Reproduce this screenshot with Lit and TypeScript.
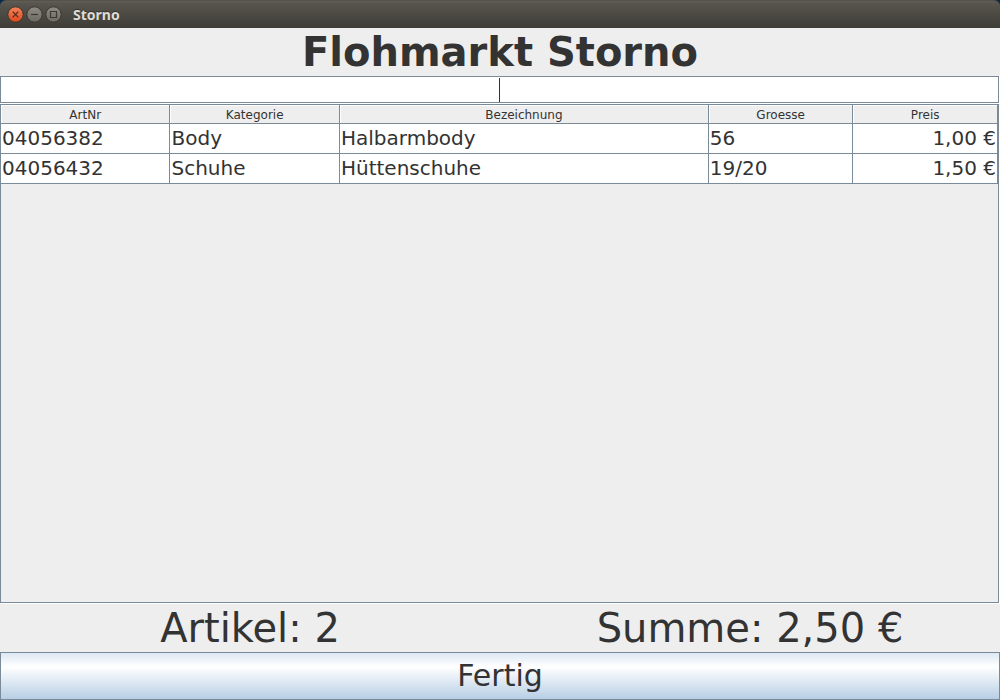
import { LitElement, html, svg, css } from "lit";
import { customElement, property, state } from "lit/decorators.js";

interface Item {
  artNr: string;
  category: string;
  label: string;
  size: string;
  price: number;
}

const euro = (value: number) => `${value.toFixed(2).replace(".", ",")} €`;

@customElement("title-bar")
export class TitleBar extends LitElement {
  @property() caption = "";

  static styles = css`
    :host {
      display: block;
      background: #06284c;
    }
    .bar {
      display: flex;
      align-items: center;
      gap: 2px;
      box-sizing: border-box;
      height: 28px;
      padding: 0 7px;
      border-top: 1px solid #55534a;
      border-radius: 6px 6px 0 0;
      background: linear-gradient(#5f5d54, #57554d 10%, #3d3c37);
    }
    .control {
      display: block;
      width: 17px;
      height: 17px;
      padding: 0;
      border: 0;
      background: none;
    }
    .control svg {
      display: block;
    }
    .caption {
      margin: 0 0 0 9px;
      font: bold 14px/21px "Noto Sans", "Open Sans", sans-serif;
      color: #dfdbd2;
      text-shadow: 0 -1px 0 #33322e;
    }
  `;

  private control(label: string, top: string, bottom: string, ink: string, glyph: string) {
    return html`
      <button class="control" aria-label=${label}>
        <svg width="17" height="17" viewBox="0 0 17 17" fill="none">
          ${svg`
            <defs>
              <linearGradient id=${label} x2="0" y2="1">
                <stop offset="0" stop-color=${top} />
                <stop offset="1" stop-color=${bottom} />
              </linearGradient>
            </defs>
            <circle cx="8.5" cy="8.5" r="7.7" fill="url(#${label})" stroke="#3a3530" />
            <path d=${glyph} stroke=${ink} stroke-width="1.2" />
          `}
        </svg>
      </button>
    `;
  }

  render() {
    return html`
      <header class="bar">
        ${this.control("Schliessen", "#f5835c", "#e0491a", "#4b2a1c", "M5.7 5.7l5.6 5.6M11.3 5.7l-5.6 5.6")}
        ${this.control("Minimieren", "#8f8c83", "#6b6962", "#3a3934", "M5 8.5h7")}
        ${this.control("Maximieren", "#8f8c83", "#6b6962", "#3a3934", "M5.5 5.5h6v6h-6z")}
        <p class="caption">${this.caption}</p>
      </header>
    `;
  }
}

@customElement("item-table")
export class ItemTable extends LitElement {
  @property({ attribute: false }) items: Item[] = [];

  static styles = css`
    :host {
      display: block;
      border: 1px solid #7a8a99;
      box-shadow: 1px 1px 0 #fff;
    }
    .table {
      width: 100%;
      table-layout: fixed;
      border-collapse: separate;
      border-spacing: 0;
      color: #333;
    }
    .medium {
      width: 17%;
    }
    .wide {
      width: 37%;
    }
    .narrow {
      width: 14.5%;
    }
    .head {
      height: 19px;
      box-sizing: border-box;
      padding: 2px 0 0;
      border-right: 1px solid #7a8a99;
      border-bottom: 1px solid #7a8a99;
      background: #eee;
      box-shadow: inset 1px 1px 0 #fff;
      font-size: 12px;
      font-weight: normal;
      line-height: 16px;
      text-align: center;
    }
    .cell {
      height: 30px;
      box-sizing: border-box;
      padding: 0 1px;
      border-right: 1px solid #7a8a99;
      border-bottom: 1px solid #7a8a99;
      background: #fff;
      font-size: 20px;
      line-height: 29px;
      white-space: nowrap;
    }
    .price {
      text-align: right;
    }
  `;

  render() {
    return html`
      <table class="table">
        <colgroup>
          <col class="medium" />
          <col class="medium" />
          <col class="wide" />
          <col class="narrow" />
          <col />
        </colgroup>
        <thead>
          <tr>
            ${["ArtNr", "Kategorie", "Bezeichnung", "Groesse", "Preis"].map(
              (name) => html`<th class="head" scope="col">${name}</th>`
            )}
          </tr>
        </thead>
        <tbody>
          ${this.items.map(
            (item) => html`
              <tr>
                <td class="cell">${item.artNr}</td>
                <td class="cell">${item.category}</td>
                <td class="cell">${item.label}</td>
                <td class="cell">${item.size}</td>
                <td class="cell price">${euro(item.price)}</td>
              </tr>
            `
          )}
        </tbody>
      </table>
    `;
  }
}

@customElement("app-root")
export class AppRoot extends LitElement {
  @state() private items: Item[] = [
    { artNr: "04056382", category: "Body", label: "Halbarmbody", size: "56", price: 1 },
    { artNr: "04056432", category: "Schuhe", label: "Hüttenschuhe", size: "19/20", price: 1.5 },
  ];

  static styles = css`
    :host {
      display: flex;
      flex-direction: column;
      min-height: 100vh;
      background: #eee;
      color: #333;
      font-family: "DejaVu Sans", sans-serif;
    }
    .title {
      margin: 0;
      font-size: 40px;
      line-height: 48px;
      font-weight: bold;
      text-align: center;
    }
    .scan {
      position: relative;
      padding: 0 1px 1px 0;
      background: #fff;
    }
    .field {
      display: block;
      box-sizing: border-box;
      width: 100%;
      height: 27px;
      padding: 1px;
      border: 1px solid #7a8a99;
      border-radius: 0;
      outline: 0;
      background: #fff;
      color: #333;
      font: 20px "DejaVu Sans", sans-serif;
      text-align: center;
    }
    .caret {
      position: absolute;
      top: 2px;
      bottom: 2px;
      right: 50%;
      width: 1px;
      background: #333;
    }
    .list {
      flex: 1;
      margin: 0 1px 1px 0;
    }
    .totals {
      display: grid;
      grid-template-columns: 1fr 1fr;
      font-size: 40px;
      line-height: 48px;
      text-align: center;
    }
    .done {
      height: 48px;
      padding: 0 0 2px;
      border: 1px solid #7a8a99;
      border-radius: 0;
      background: linear-gradient(#dde8f3, #fff 30%, #b8cfe5);
      color: #333;
      font: 30px "DejaVu Sans", sans-serif;
    }
  `;

  render() {
    const sum = this.items.reduce((total, item) => total + item.price, 0);
    return html`
      <title-bar caption="Storno"></title-bar>
      <h1 class="title">Flohmarkt Storno</h1>
      <div class="scan">
        <input class="field" type="text" aria-label="Artikelnummer" />
        <span class="caret"></span>
      </div>
      <item-table class="list" .items=${this.items}></item-table>
      <div class="totals">
        <span>Artikel: ${this.items.length}</span>
        <span>Summe: ${euro(sum)}</span>
      </div>
      <button class="done">Fertig</button>
    `;
  }
}
